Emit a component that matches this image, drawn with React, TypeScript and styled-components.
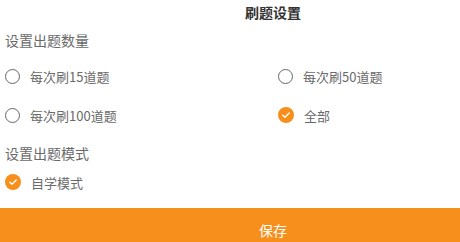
import React from "react";
import styled, { createGlobalStyle } from "styled-components";

const Global = createGlobalStyle`
  html, body {
    margin: 0;
    padding: 0;
    background: #fff;
    overflow: hidden;
  }
  body {
    font-family: "Noto Sans CJK SC", "Noto Sans", sans-serif;
  }
`;

const Page = styled.div`
  width: 546px;
  height: 100vh;
  overflow: hidden;
  display: flex;
  flex-direction: column;
`;

const Header = styled.div`
  height: 25px;
  line-height: 25px;
  text-align: center;
  font-size: 14px;
  font-weight: 700;
  color: #333;
`;

const SectionTitle = styled.div<{ $top: number; $bottom: number }>`
  height: 30px;
  line-height: 30px;
  margin: ${(p) => p.$top}px 0 ${(p) => p.$bottom}px;
  padding-left: 5px;
  font-size: 14px;
  color: #6a6a6a;
`;

const Options = styled.div<{ $cols: number }>`
  display: grid;
  grid-template-columns: repeat(${(p) => p.$cols}, 1fr);
  row-gap: 11px;
`;

const Option = styled.label`
  height: 28px;
  display: flex;
  align-items: center;
  gap: 10px;
  padding-left: 5px;
  font-size: 13px;
  color: #6a6a6a;
`;

const Ring = styled.span`
  width: 13px;
  height: 13px;
  border: 1.5px solid #666;
  border-radius: 50%;
  flex: none;
`;

const SaveBar = styled.button`
  flex: none;
  margin-top: 12px;
  height: 48px;
  border: none;
  padding: 0 0 4px;
  background: #f78f1c;
  color: #fff;
  font-family: inherit;
  font-size: 14px;
  display: flex;
  align-items: center;
  justify-content: center;
`;

const Checked = () => (
  <svg width="16" height="16" viewBox="0 0 16 16" style={{ flex: "none" }}>
    <circle cx="8" cy="8" r="8" fill="#f78f1c" />
    <path
      d="M4.8 8.2 L7 10.2 L11.2 6"
      fill="none"
      stroke="#fff"
      strokeWidth="1.4"
      strokeLinecap="round"
      strokeLinejoin="round"
    />
  </svg>
);

type Item = { label: string; checked?: boolean };

const counts: Item[] = [
  { label: "每次刷15道题" },
  { label: "每次刷50道题" },
  { label: "每次刷100道题" },
  { label: "全部", checked: true },
];

const modes: Item[] = [{ label: "自学模式", checked: true }];

const OptionList = ({ items, cols }: { items: Item[]; cols: number }) => (
  <Options $cols={cols}>
    {items.map((it) => (
      <Option key={it.label}>
        {it.checked ? <Checked /> : <Ring />}
        {it.label}
      </Option>
    ))}
  </Options>
);

export default function App() {
  return (
    <Page>
      <Global />
      <Header>刷题设置</Header>
      <SectionTitle $top={0} $bottom={7}>
        设置出题数量
      </SectionTitle>
      <OptionList items={counts} cols={2} />
      <SectionTitle $top={9} $bottom={0}>
        设置出题模式
      </SectionTitle>
      <OptionList items={modes} cols={1} />
      <SaveBar>保存</SaveBar>
    </Page>
  );
}
